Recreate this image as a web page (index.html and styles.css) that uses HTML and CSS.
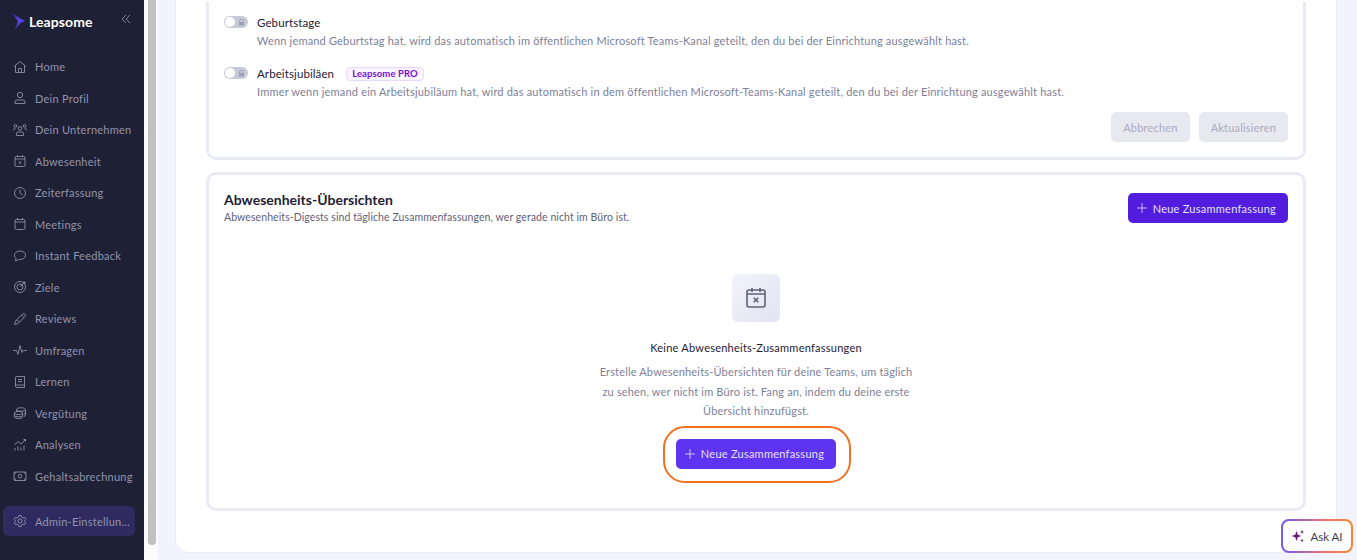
FILE: index.html
```html
<!DOCTYPE html>
<html lang="de">
<head>
<meta charset="UTF-8">
<title>Leapsome</title>
<link rel="stylesheet" href="styles.css">
</head>
<body>
<svg class="defs" width="0" height="0">
    <defs>
        <linearGradient id="logo-grad" x1="0" y1="0" x2="0" y2="1">
            <stop offset="0" stop-color="#2f2b96"/>
            <stop offset=".5" stop-color="#5f48f2"/>
            <stop offset="1" stop-color="#25234f"/>
        </linearGradient>
    </defs>
</svg>

<div class="app">
    <aside class="sidebar">
        <div class="brand">
            <svg class="logo" width="14" height="18" viewBox="0 0 14 18"><path d="M0 0 L13 8 L9 9.5 L2 18 L6 8.5 Z" fill="url(#logo-grad)"/></svg>
            <span class="brand-name">Leapsome</span>
            <svg class="collapse" width="10" height="10" viewBox="0 0 10 10" fill="none" stroke="#7f8199" stroke-width="1"><path d="M5 1 L1 5 L5 9 M9 1 L5 5 L9 9"/></svg>
        </div>
        <nav class="nav">
            <a class="nav-item"><svg class="nav-icon" viewBox="0 0 14 14"><path d="M1 6.5 L7 1.5 L13 6.5 M2.5 5.5 V12.5 H11.5 V5.5 M5.5 12.5 V8.5 H8.5 V12.5"/></svg>Home</a>
            <a class="nav-item"><svg class="nav-icon" viewBox="0 0 14 14"><circle cx="7" cy="4" r="2.7"/><path d="M2 12.5 V11 Q2 9 4 9 H10 Q12 9 12 11 V12.5 Z"/></svg>Dein Profil</a>
            <a class="nav-item"><svg class="nav-icon" viewBox="0 0 14 14"><circle cx="7" cy="5.5" r="1.8"/><circle cx="2.5" cy="3" r="1.4"/><circle cx="11.5" cy="3" r="1.4"/><path d="M3.5 12.5 V10.5 Q3.5 9 5 9 H9 Q10.5 9 10.5 10.5 V12.5 Z M0 7.5 Q.5 5.7 2.5 5.7 M14 7.5 Q13.5 5.7 11.5 5.7"/></svg>Dein Unternehmen</a>
            <a class="nav-item"><svg class="nav-icon" viewBox="0 0 14 14"><rect x="2" y="2.5" width="10" height="10" rx="1.5"/><path d="M4.5 1 V3 M9.5 1 V3 M2 5 H12 M5.7 7.3 L8.3 9.9 M8.3 7.3 L5.7 9.9"/></svg>Abwesenheit</a>
            <a class="nav-item"><svg class="nav-icon" viewBox="0 0 14 14"><circle cx="7" cy="7" r="5.5"/><path d="M7 3.5 V7 L9.5 9"/></svg>Zeiterfassung</a>
            <a class="nav-item"><svg class="nav-icon" viewBox="0 0 14 14"><rect x="2" y="2.5" width="10" height="10" rx="1.5"/><path d="M4.5 1 V3 M9.5 1 V3 M2 5 H12"/></svg>Meetings</a>
            <a class="nav-item"><svg class="nav-icon" viewBox="0 0 14 14"><path d="M7 2 C10.2 2 12.5 3.8 12.5 6.3 C12.5 8.8 10.2 10.5 7 10.5 L5.5 10.4 L2.5 12 L3 9.5 C2 8.6 1.5 7.5 1.5 6.3 C1.5 3.8 3.8 2 7 2 Z"/></svg>Instant Feedback</a>
            <a class="nav-item"><svg class="nav-icon" viewBox="0 0 14 14"><circle cx="7" cy="7" r="5.5"/><circle cx="7" cy="7" r="3"/><path d="M7 7 L12 2 M10 2 H12 V4"/></svg>Ziele</a>
            <a class="nav-item"><svg class="nav-icon" viewBox="0 0 14 14"><path d="M1.5 12.5 L2.5 9 L9.5 2 Q10.5 1 11.8 2.2 Q13 3.5 12 4.5 L5 11.5 Z M8.5 3 L11 5.5 M4 8 L6 10"/></svg>Reviews</a>
            <a class="nav-item"><svg class="nav-icon" viewBox="0 0 14 14"><path d="M0 7.5 H3.5 L5 11.5 L7 2.5 L9 9.5 L10 7.5 H14"/></svg>Umfragen</a>
            <a class="nav-item"><svg class="nav-icon" viewBox="0 0 14 14"><path d="M2.5 11 V2.5 Q2.5 1.5 3.5 1.5 H11.5 V12.5 H3.7 Q2.5 12.5 2.5 11 Q2.5 10 3.7 10 H11.5 M5 4.5 H9 M5 6.5 H9"/></svg>Lernen</a>
            <a class="nav-item"><svg class="nav-icon" viewBox="0 0 14 14"><ellipse cx="8" cy="3.5" rx="4.5" ry="1.8"/><path d="M3.5 3.5 V5.5 M12.5 3.5 V9 Q12.5 10 11 10.5 M12.5 6.5 Q12.5 7.5 11 8"/><ellipse cx="5.5" cy="7" rx="4.2" ry="1.6"/><path d="M1.3 7 V11 Q1.3 12.6 5.5 12.6 Q9.7 12.6 9.7 11 V7 M1.3 9.2 Q1.3 10.8 5.5 10.8 Q9.7 10.8 9.7 9.2"/></svg>Vergütung</a>
            <a class="nav-item"><svg class="nav-icon" viewBox="0 0 14 14"><path d="M2 12.5 V10 M5 12.5 V8.5 M8 12.5 V9.5 M11 12.5 V7.5 M1.5 7 L5 3.5 L8 6 L12.5 1.5 M10.5 1.5 H12.5 V3.5"/></svg>Analysen</a>
            <a class="nav-item"><svg class="nav-icon" viewBox="0 0 14 14"><rect x="1" y="3" width="12" height="8.5" rx="1"/><circle cx="7" cy="7.2" r="1.8"/><path d="M1 5 Q2.5 5 3 3 M13 5 Q11.5 5 11 3 M1 9.5 Q2.5 9.5 3 11.5 M13 9.5 Q11.5 9.5 11 11.5"/></svg>Gehaltsabrechnung</a>
        </nav>
        <a class="nav-item nav-item-active"><svg class="nav-icon" viewBox="0 0 14 14"><circle cx="7" cy="7" r="2"/><path d="M5.8 1.5 H8.2 L8.6 3.1 L10 3.9 L11.6 3.4 L12.8 5.4 L11.6 6.5 V7.5 L12.8 8.6 L11.6 10.6 L10 10.1 L8.6 10.9 L8.2 12.5 H5.8 L5.4 10.9 L4 10.1 L2.4 10.6 L1.2 8.6 L2.4 7.5 V6.5 L1.2 5.4 L2.4 3.4 L4 3.9 L5.4 3.1 Z"/></svg>Admin-Einstellun...</a>
    </aside>

    <div class="scrollbar"><div class="scroll-thumb"></div></div>

    <main class="content">
        <div class="panel">
            <section class="card card-settings">
                <div class="setting">
                    <div class="toggle"><span class="knob"></span><svg class="lock" width="7" height="7" viewBox="0 0 7 7"><path d="M1.5 3 V2.2 A2 2 0 0 1 5.5 2.2 V3" fill="none" stroke="#9a9cb2" stroke-width=".9"/><rect x="1" y="3" width="5" height="3.6" rx=".6" fill="#9a9cb2"/></svg></div>
                    <div class="setting-text">
                        <div class="setting-title">Geburtstage</div>
                        <p class="setting-desc">Wenn jemand Geburtstag hat, wird das automatisch im öffentlichen Microsoft Teams-Kanal geteilt, den du bei der Einrichtung ausgewählt hast.</p>
                    </div>
                </div>
                <div class="setting">
                    <div class="toggle"><span class="knob"></span><svg class="lock" width="7" height="7" viewBox="0 0 7 7"><path d="M1.5 3 V2.2 A2 2 0 0 1 5.5 2.2 V3" fill="none" stroke="#9a9cb2" stroke-width=".9"/><rect x="1" y="3" width="5" height="3.6" rx=".6" fill="#9a9cb2"/></svg></div>
                    <div class="setting-text">
                        <div class="setting-title">Arbeitsjubiläen <span class="pro-badge">Leapsome PRO</span></div>
                        <p class="setting-desc">Immer wenn jemand ein Arbeitsjubiläum hat, wird das automatisch in dem öffentlichen Microsoft-Teams-Kanal geteilt, den du bei der Einrichtung ausgewählt hast.</p>
                    </div>
                </div>
                <div class="actions">
                    <button class="btn btn-disabled">Abbrechen</button>
                    <button class="btn btn-disabled">Aktualisieren</button>
                </div>
            </section>

            <section class="card card-digests">
                <div class="card-head">
                    <div>
                        <h2 class="card-title">Abwesenheits-Übersichten</h2>
                        <p class="card-sub">Abwesenheits-Digests sind tägliche Zusammenfassungen, wer gerade nicht im Büro ist.</p>
                    </div>
                    <button class="btn btn-primary"><svg width="10" height="10" viewBox="0 0 10 10" fill="none" stroke="currentColor" stroke-width=".8"><path d="M5 0 V10 M0 5 H10"/></svg>Neue Zusammenfassung</button>
                </div>
                <div class="empty">
                    <div class="empty-icon">
                        <svg width="24" height="24" viewBox="0 0 24 24" fill="none" stroke="#5f6178" stroke-width="1.6"><rect x="3" y="4" width="18" height="17" rx="2"/><path d="M8 2 V6 M16 2 V6 M3 8 H21 M9.7 11.7 L14.3 16.3 M14.3 11.7 L9.7 16.3"/></svg>
                    </div>
                    <h3 class="empty-title">Keine Abwesenheits-Zusammenfassungen</h3>
                    <p class="empty-text">Erstelle Abwesenheits-Übersichten für deine Teams, um täglich zu sehen, wer nicht im Büro ist. Fang an, indem du deine erste Übersicht hinzufügst.</p>
                    <div class="ring-wrap">
                        <button class="btn btn-primary btn-bright"><svg width="10" height="10" viewBox="0 0 10 10" fill="none" stroke="currentColor" stroke-width=".8"><path d="M5 0 V10 M0 5 H10"/></svg>Neue Zusammenfassung</button>
                        <span class="ring"></span>
                    </div>
                </div>
            </section>
        </div>
    </main>
</div>

<button class="ask-ai">
    <svg width="14" height="14" viewBox="0 0 14 14" fill="#6b1a7a"><path d="M5.5 2 L6.8 5.7 L10.5 7 L6.8 8.3 L5.5 12 L4.2 8.3 L.5 7 L4.2 5.7 Z"/><path d="M11 .8 L11.6 2.4 L13.2 3 L11.6 3.6 L11 5.2 L10.4 3.6 L8.8 3 L10.4 2.4 Z"/><path d="M11 9.5 L11.5 10.9 L12.9 11.4 L11.5 11.9 L11 13.3 L10.5 11.9 L9.1 11.4 L10.5 10.9 Z"/></svg>
    Ask AI
</button>
</body>
</html>
```

FILE: styles.css
```css
* {
    box-sizing: border-box;
}
body {
    margin: 0;
    height: 560px;
    overflow: hidden;
    background-color: #ffffff;
    color: #1e2035;
    font-family: "Lato", "Liberation Sans", sans-serif;
    font-size: 11px;
}
p, h2, h3 {
    margin: 0;
}
.defs {
    position: absolute;
}
.app {
    display: flex;
    height: 560px;
}

/* sidebar */
.sidebar {
    width: 144px;
    flex-shrink: 0;
    background-color: #1e2035;
    padding: 0 9px 0 3px;
    display: flex;
    flex-direction: column;
}
.brand {
    display: flex;
    align-items: center;
    height: 43px;
    padding-left: 9px;
}
.brand-name {
    color: #ffffff;
    font-size: 14px;
    font-weight: 700;
    letter-spacing: .1px;
    margin-left: 3px;
}
.collapse {
    margin-left: 28px;
    margin-bottom: 6px;
}
.nav {
    display: flex;
    flex-direction: column;
    padding-top: 8px;
}
.nav-item {
    display: flex;
    align-items: center;
    gap: 8px;
    height: 31.5px;
    padding-left: 10px;
    color: #9294ad;
    font-size: 11px;
    letter-spacing: .25px;
    white-space: nowrap;
}
.nav-icon {
    width: 14px;
    height: 14px;
    flex-shrink: 0;
    fill: none;
    stroke: #8d8fa8;
    stroke-width: .9;
}
.nav-item-active {
    height: 30px;
    margin-top: 14px;
    background-color: #2f2b60;
    border-radius: 6px;
}

.scrollbar {
    width: 14px;
    flex-shrink: 0;
    background-color: #fbfbfd;
    padding: 0 2px 0 4px;
}
.scroll-thumb {
    height: 545px;
    background-color: #c1c1c1;
    border-radius: 0 0 4px 4px;
}

/* main area */
.content {
    flex: 1;
    background-color: #f3f3fd;
    padding: 0 20px 7px 17px;
}
.panel {
    height: 553px;
    background-color: #ffffff;
    border-radius: 0 0 14px 14px;
    border: 1px solid #ebebf5;
    border-top: none;
    padding: 0 30px 41px;
    display: flex;
    flex-direction: column;
    justify-content: flex-end;
    gap: 12px;
    overflow: hidden;
}
.card {
    border: 3px solid #eaeaf2;
    border-radius: 10px;
    flex-shrink: 0;
    padding: 0 15px;
}
.card-settings {
    padding-bottom: 15px;
    border-top: none;
    border-radius: 0 0 10px 10px;
}
.setting {
    display: flex;
    gap: 9px;
    height: 51px;
    padding-top: 13px;
}
.toggle {
    width: 24px;
    height: 12px;
    margin-top: 1px;
    background-color: #c9cad9;
    border-radius: 6px;
    display: flex;
    align-items: center;
    justify-content: space-between;
    padding: 0 3px 0 1px;
}
.knob {
    width: 10px;
    height: 10px;
    background-color: #ffffff;
    border-radius: 50%;
}
.setting-title {
    font-size: 11.5px;
    line-height: 15px;
    letter-spacing: .1px;
    display: flex;
    align-items: center;
    gap: 12px;
}
.setting-desc {
    margin-top: 3px;
    color: #7d7f9b;
    font-size: 11px;
    line-height: 16px;
    letter-spacing: .185px;
}
.pro-badge {
    color: #7a0fd6;
    background-color: #f9f3ff;
    border: 1px solid #ead9fb;
    border-radius: 4px;
    font-size: 9.5px;
    font-weight: 700;
    line-height: 12px;
    padding: 0 5px;
}
.actions {
    display: flex;
    justify-content: flex-end;
    gap: 9px;
    margin-top: 8px;
}
.btn {
    height: 30px;
    border: none;
    border-radius: 5px;
    font-family: inherit;
    font-size: 11px;
    letter-spacing: .25px;
    padding: 0 12px;
    display: flex;
    align-items: center;
}
.btn-disabled {
    background-color: #e8e8ef;
    color: #a9aac0;
    letter-spacing: .2px;
}
.btn-primary {
    background-color: #521ddf;
    color: #e6e0fb;
    gap: 6px;
    padding: 0 12px 0 9px;
}
.btn-bright {
    background-color: #5f34f0;
}
.card-digests {
    height: 339px;
    padding-top: 15px;
}
.card-head {
    display: flex;
    justify-content: space-between;
    align-items: flex-start;
}
.card-title {
    font-size: 14px;
    font-weight: 700;
    line-height: 19px;
    color: #1e2035;
}
.card-sub {
    margin-top: 1px;
    font-size: 10.5px;
    line-height: 14px;
    color: #5f6178;
    letter-spacing: .08px;
}
.card-head .btn {
    margin-top: 3px;
}
.empty {
    display: flex;
    flex-direction: column;
    align-items: center;
    padding-top: 50px;
}
.empty-icon {
    width: 48px;
    height: 48px;
    border-radius: 6px;
    background: linear-gradient(135deg, #f3f3fb, #e3e3f3);
    display: flex;
    align-items: center;
    justify-content: center;
}
.empty-title {
    margin-top: 18px;
    font-size: 11px;
    font-weight: 400;
    line-height: 16px;
    letter-spacing: .24px;
}
.empty-text {
    width: 322px;
    margin-top: 6px;
    color: #7d7f9b;
    font-size: 11px;
    line-height: 19.5px;
    letter-spacing: .17px;
    text-align: center;
}
.ring-wrap {
    position: relative;
    margin-top: 18px;
}
.ring {
    position: absolute;
    top: -13px;
    bottom: -14px;
    left: -13px;
    right: -15px;
    border: 2px solid #f3701e;
    border-radius: 22px;
}

/* floating assistant button */
.ask-ai {
    position: absolute;
    left: 1281px;
    top: 519px;
    width: 72px;
    height: 34px;
    border: 2px solid transparent;
    border-radius: 8px;
    background: linear-gradient(#ffffff, #ffffff) padding-box, linear-gradient(90deg, #6a5cf5, #f0706e 60%, #f08a2c) border-box;
    color: #3a3b50;
    font-family: inherit;
    font-size: 11.5px;
    display: flex;
    align-items: center;
    justify-content: center;
    gap: 5px;
    padding: 0;
}
```
